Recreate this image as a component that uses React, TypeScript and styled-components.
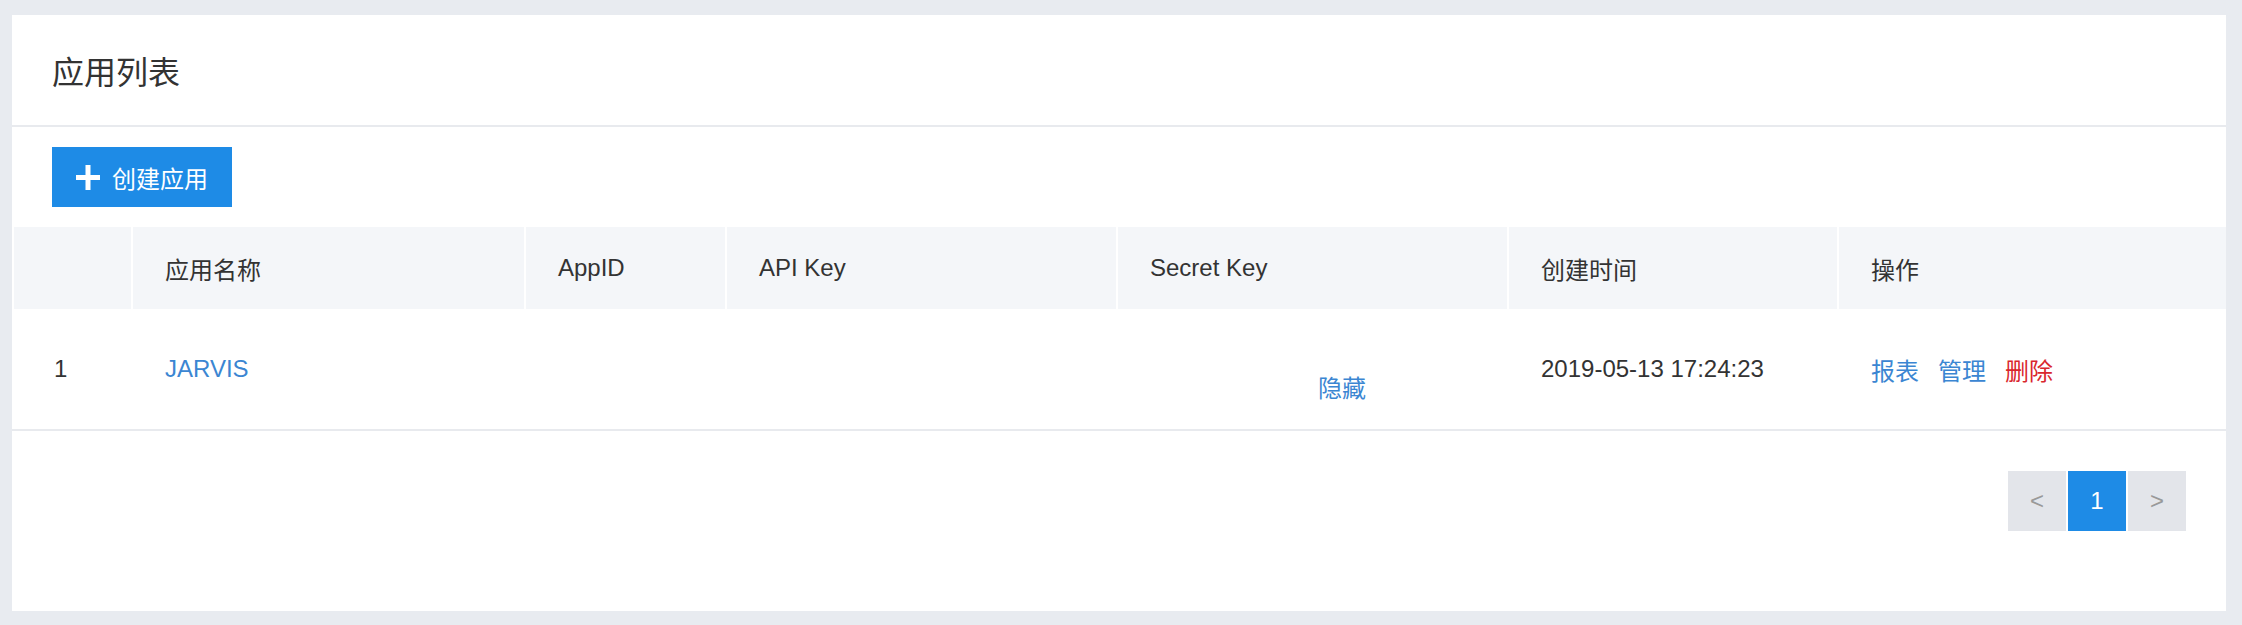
import React from "react";
import styled, { createGlobalStyle } from "styled-components";

const GlobalStyle = createGlobalStyle`
  html, body {
    margin: 0;
    padding: 0;
    background: #e8ebf0;
  }
  body {
    font-family: "Liberation Sans", "Noto Sans CJK SC", sans-serif;
    color: #333;
  }
`;

const COLUMNS = "119px 393px 201px 391px 391px 330px 1fr";

const Page = styled.div`
  padding: 15px 16px 14px 12px;
`;

const Card = styled.section`
  background: #fff;
  display: flex;
  flex-direction: column;
`;

const TitleBar = styled.header`
  height: 110px;
  display: flex;
  align-items: center;
  padding: 0 40px;
  border-bottom: 2px solid #e8eaee;
`;

const Title = styled.h1`
  margin: 0;
  font-size: 32px;
  font-weight: normal;
  color: #333;
`;

const Toolbar = styled.div`
  padding: 20px 40px;
  display: flex;
`;

const CreateButton = styled.button`
  display: inline-flex;
  align-items: center;
  gap: 12px;
  height: 60px;
  padding: 0 24px 0 24px;
  border: none;
  background: #1e8be6;
  color: #fff;
  font-family: inherit;
  font-size: 24px;
  cursor: pointer;
`;

const Table = styled.div`
  display: flex;
  flex-direction: column;
`;

const HeaderRow = styled.div`
  display: grid;
  grid-template-columns: ${COLUMNS};
  height: 82px;
  background: #f4f6f9;
`;

const HeaderCell = styled.div<{ $first?: boolean }>`
  display: flex;
  align-items: center;
  border-left: 2px solid #fff;
  padding-left: ${(p) => (p.$first ? 40 : 32)}px;
  font-size: 24px;
  color: #333;
`;

const BodyRow = styled.div`
  display: grid;
  grid-template-columns: ${COLUMNS};
  height: 120px;
  border-bottom: 2px solid #e8eaee;
`;

const BodyCell = styled.div<{ $first?: boolean }>`
  display: flex;
  align-items: center;
  border-left: 2px solid transparent;
  padding-left: ${(p) => (p.$first ? 40 : 32)}px;
  font-size: 24px;
  color: #333;
`;

const SecretCell = styled(BodyCell)`
  flex-direction: column;
  align-items: flex-start;
  justify-content: center;
  line-height: 40px;
`;

const SecretLine = styled.div`
  height: 40px;
  display: flex;
  align-items: center;
`;

const Masked = styled.span<{ $w: number }>`
  display: inline-block;
  width: ${(p) => p.$w}px;
  height: 1em;
`;

const LinkText = styled.a<{ $danger?: boolean }>`
  color: ${(p) => (p.$danger ? "#d9272d" : "#3b86d2")};
  text-decoration: none;
  cursor: pointer;
`;

const Actions = styled.div`
  display: flex;
  gap: 19px;
`;

const Pager = styled.nav`
  display: flex;
  justify-content: flex-end;
  gap: 2px;
  padding: 40px 40px 80px;
`;

const PageButton = styled.button<{ $active?: boolean }>`
  width: 58px;
  height: 60px;
  border: none;
  display: flex;
  align-items: center;
  justify-content: center;
  background: ${(p) => (p.$active ? "#1e8be6" : "#e3e5ea")};
  color: ${(p) => (p.$active ? "#fff" : "#999")};
  font-family: inherit;
  font-size: 24px;
  padding: 0;
`;

const PlusIcon = () => (
  <svg width="24" height="25" viewBox="0 0 24 25" aria-hidden="true">
    <rect x="0" y="10" width="24" height="5" fill="#fff" />
    <rect x="9.5" y="0" width="5" height="25" fill="#fff" />
  </svg>
);

export default function App() {
  return (
    <>
      <GlobalStyle />
      <Page>
        <Card>
          <TitleBar>
            <Title>应用列表</Title>
          </TitleBar>
          <Toolbar>
            <CreateButton>
              <PlusIcon />
              创建应用
            </CreateButton>
          </Toolbar>
          <Table>
            <HeaderRow>
              <HeaderCell $first />
              <HeaderCell>应用名称</HeaderCell>
              <HeaderCell>AppID</HeaderCell>
              <HeaderCell>API Key</HeaderCell>
              <HeaderCell>Secret Key</HeaderCell>
              <HeaderCell>创建时间</HeaderCell>
              <HeaderCell>操作</HeaderCell>
            </HeaderRow>
            <BodyRow>
              <BodyCell $first>1</BodyCell>
              <BodyCell>
                <LinkText>JARVIS</LinkText>
              </BodyCell>
              <BodyCell />
              <BodyCell />
              <SecretCell>
                <SecretLine>
                  <Masked $w={300} />
                </SecretLine>
                <SecretLine>
                  <Masked $w={168} />
                  <LinkText>隐藏</LinkText>
                </SecretLine>
              </SecretCell>
              <BodyCell>2019-05-13 17:24:23</BodyCell>
              <BodyCell>
                <Actions>
                  <LinkText>报表</LinkText>
                  <LinkText>管理</LinkText>
                  <LinkText $danger>删除</LinkText>
                </Actions>
              </BodyCell>
            </BodyRow>
          </Table>
          <Pager>
            <PageButton>&lt;</PageButton>
            <PageButton $active>1</PageButton>
            <PageButton>&gt;</PageButton>
          </Pager>
        </Card>
      </Page>
    </>
  );
}
